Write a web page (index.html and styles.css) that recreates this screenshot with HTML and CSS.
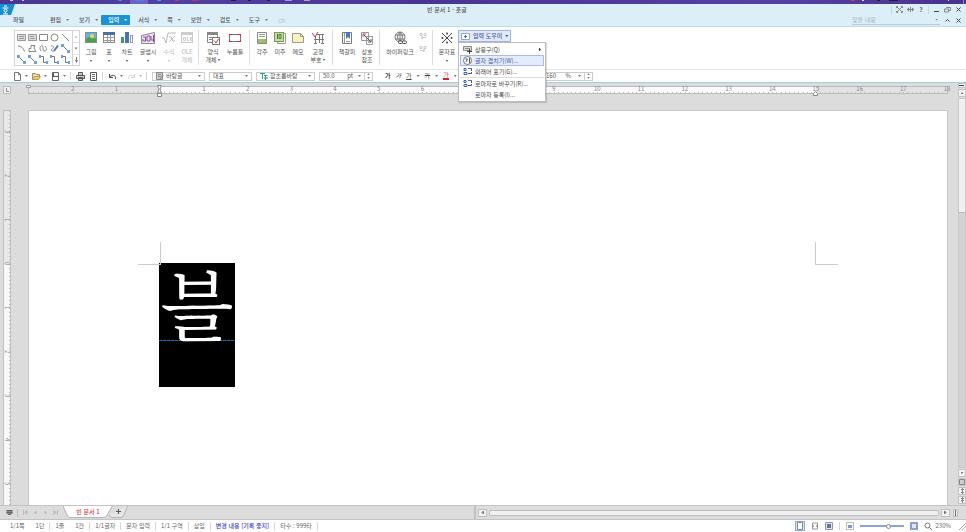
FILE: index.html
```
<!DOCTYPE html>
<html lang="ko">
<head>
<meta charset="utf-8">
<title>빈 문서 1 - 훈글</title>
<link rel="stylesheet" href="styles.css">
</head>
<body>
<div class="desktop">
  <svg width="820" height="4" aria-hidden="true">
    <rect x="130" width="18" height="4" fill="#6f62c4"/><rect x="136" width="7" height="1" fill="#2f8fe0"/>
    <g fill="#c8c4e4"><rect x="10" width="3" height="1"/><rect x="22" width="2" height="1"/></g>
    <rect x="118" width="4" height="1" fill="#3a8ddb"/><rect x="157" width="4" height="1" fill="#3a9be8"/>
    <rect x="175" width="4" height="1" fill="#c83a58"/><rect x="192" width="7" height="1" fill="#b8325c"/>
    <rect x="231" width="5" height="1" fill="#222"/><rect x="248" width="3" height="1" fill="#222"/><rect x="267" width="3" height="1" fill="#222"/>
    <rect x="285" width="7" height="1" fill="#8fa6d8"/><rect x="304" width="6" height="1" fill="#b9a898"/>
  </svg>
  <svg width="120" height="4" aria-hidden="true">
    <rect x="5" width="4" height="1" fill="#e03050"/><rect x="16" width="2" height="1" fill="#ddd"/><rect x="31" width="3" height="1" fill="#222"/><rect x="43" width="9" height="1" fill="#222"/><rect x="102" width="1" height="1" fill="#ddd"/><rect x="117" width="1" height="4" fill="#8a80c8"/>
  </svg>
</div>

<header class="head">
  <div class="titlebar">
    <svg class="logo" width="16" height="11" viewBox="0 0 16 11" aria-hidden="true"><path d="M0 0H15L11 11H0Z" fill="#168fd2"/><path d="M4 2H7M2.500 4H8.500M5.500 8V10M3 10H8" stroke="#fff" fill="none"/><circle cx="5.500" cy="6.500" r="1.500" stroke="#fff" fill="none"/></svg>
    <h1>빈 문서 1 - 훈글</h1>
    <div class="wins">
      <i class="sep"></i>
      <button aria-label="전체 화면"><svg width="7" height="7" viewBox="0 0 7 7"><path d="M.5 2V.5H2M5 .5H6.500V2M6.500 5V6.500H5M2 6.500H.5V5M1 1L6 6M6 1L1 6" class="ln"/></svg></button>
      <button aria-label="크기 조절"><svg width="7" height="7" viewBox="0 0 7 7"><path d="M0 3.500L2 1.500V5.500ZM7 3.500L5 1.500V5.500Z" fill="#666"/><path d="M1 3.500H6M3.500 1V6" class="ln"/></svg></button>
      <button aria-label="도움말"><b>?</b></button>
      <i class="sep"></i>
      <button aria-label="최소화"><svg width="7" height="7"><path d="M1 5.500H6" stroke="#444"/></svg></button>
      <button aria-label="이전 크기로"><svg width="7" height="7"><path d="M2.500 2V1.500H6.500V4.500H5M.5 3H4.500V6H.5Z" class="ln"/></svg></button>
      <button aria-label="닫기"><svg width="7" height="7"><path d="M1.500 1.500L5.500 5.500M5.500 1.500L1.500 5.500" stroke="#444"/></svg></button>
    </div>
  </div>
  <nav class="menubar">
    <button class="file">파일</button>
    <button>편집<i class="car"></i></button>
    <button>보기<i class="car"></i></button>
    <button class="on">입력<i class="car"></i></button>
    <button>서식<i class="car"></i></button>
    <button>쪽<i class="car"></i></button>
    <button>보안<i class="car"></i></button>
    <button>검토<i class="car"></i></button>
    <button>도구<i class="car"></i></button>
    <button aria-label="추가"><svg width="8" height="7"><path d="M1 2.500H4V5.500H1ZM5 5L7 2M4.500 1L7 6" stroke="#c3d2dc" fill="none"/></svg></button>
    <div class="find">
      <label><input type="text" placeholder="찾을 내용" aria-label="찾을 내용"><i class="car"></i></label>
      <button aria-label="접기"><svg width="7" height="7"><path d="M1.500 4.500L3.500 2.500L5.500 4.500" stroke="#444" fill="none"/></svg></button>
      <button aria-label="문서 닫기"><svg width="7" height="7"><path d="M1.500 1.500L5.500 5.500M5.500 1.500L1.500 5.500" stroke="#444"/></svg></button>
    </div>
  </nav>
</header>

<section class="ribbon">
  <div class="gallery">
    <div class="shapes">
      <button aria-label="가로 글상자"><svg width="9" height="9"><path d="M.5 1.500H8.500V7.500H.5ZM2 3.500H7M2 5.500H7" stroke="#999" fill="#ddd"/></svg></button>
      <button aria-label="세로 글상자"><svg width="9" height="9"><path d="M.5 1.500H8.500V7.500H.5ZM2 3.500H6M2 5.500H7" stroke="#999" fill="#ddd"/></svg></button>
      <button aria-label="직사각형"><svg width="9" height="9"><path d="M.5 1.500H8.500V7.500H.5Z" class="ln"/></svg></button>
      <button aria-label="타원"><svg width="9" height="9"><circle cx="4.500" cy="4.500" r="3.500" class="ln"/></svg></button>
      <button aria-label="직선"><svg width="9" height="9"><path d="M1 1L8 8" class="ln"/></svg></button>
      <button aria-label="호"><svg width="9" height="9"><path d="M1 2Q6 2 7.500 7.500" class="ln"/></svg></button>
      <button aria-label="다각형"><svg width="9" height="9"><path d="M3 1.500H7L6 4L8 7.500H1V4.500H3Z" class="ln"/></svg></button>
      <button aria-label="곡선"><svg width="9" height="9"><path d="M2 7C-1 2 4 0 4 3S4 7 6 7S8 4 6 2" class="ln"/></svg></button>
      <button aria-label="자유선"><svg width="9" height="9"><path d="M1 2C4 1 4 4 2 5S3 8 4 7" class="ln"/><path d="M4 7L8 1.500" stroke="#4a78c8" stroke-width="2"/></svg></button>
      <button aria-label="직선 연결선"><svg width="9" height="9"><use href="#conn"/></svg></button>
      <button aria-label="화살표 연결선"><svg width="9" height="9"><use href="#conn"/></svg></button>
      <button aria-label="양쪽 화살표 연결선"><svg width="9" height="9"><use href="#conn"/></svg></button>
      <button aria-label="꺾인 연결선"><svg width="9" height="9"><use href="#elbow"/></svg></button>
      <button aria-label="꺾인 화살표 연결선"><svg width="9" height="9"><use href="#elbow"/></svg></button>
      <button aria-label="꺾인 양쪽 연결선"><svg width="9" height="9"><use href="#elbow"/></svg></button>
    </div>
    <div class="gscroll">
      <button class="dim" aria-label="위"><i class="car up"></i></button><button aria-label="아래"><i class="car"></i></button><button aria-label="자세히"><svg width="5" height="6"><path d="M2.500 0V4" stroke="#777"/><path d="M1 3H4L2.500 6Z" fill="#777"/></svg></button>
    </div>
  </div>

  <div class="group first">
    <button class="tool"><svg width="14" height="14" viewBox="0 0 14 14"><rect x="1.500" y="1.500" width="11" height="10" fill="#57b8e8" stroke="#8a8a8a"/><path d="M2 11V8L5 6L8 8L12 7V11Z" fill="#4fa03c"/><circle cx="8" cy="5" r="2" fill="#ffd33a"/></svg>그림<i class="car"></i></button>
    <button class="tool"><svg width="14" height="14" viewBox="0 0 14 14"><rect x="1.500" y="1.500" width="11" height="10" fill="#fff" stroke="#888"/><rect x="1" y="1" width="12" height="3" fill="#4a6ea8"/><path d="M2 6.500H12M2 9.500H12M5.500 4V11M8.500 4V11" stroke="#999"/></svg>표<i class="car"></i></button>
    <button class="tool"><svg width="14" height="14" viewBox="0 0 14 14"><rect x="1" y="6" width="3" height="6" fill="#3c9a70"/><rect x="5" y="1" width="4" height="11" fill="#4a70b8"/><rect x="10.500" y="4.500" width="2" height="7" fill="#fff" stroke="#999"/></svg>차트<i class="car"></i></button>
    <button class="tool w24"><svg width="16" height="14" viewBox="0 0 16 14"><path d="M1.500 4.500L14.500 1.500V12.500H1.500Z" fill="#f1e8f6" stroke="#888"/><path d="M3 6H5.500V10M3 8V10H6M7 5V10H10V5ZM11 5V9H13M13.500 4V11" stroke="#8a4aa8" fill="none"/></svg>글맵시<i class="car"></i></button>
    <button class="tool off" disabled><svg width="16" height="14" viewBox="0 0 16 14"><path d="M1 7L3 7L5 12L7 2H15M8 6Q11 5 11 8T14 10M14 5L8 11" stroke="#bbb" fill="none"/></svg>수식<i class="car"></i></button>
    <button class="tool off" disabled><svg width="14" height="14" viewBox="0 0 14 14"><rect x="1.500" y="1.500" width="11" height="10" fill="#fff" stroke="#ccc"/><path d="M1 3H13" stroke="#ccc" stroke-width="2"/><path d="M3.500 6.500H5.500V9.500H3.500ZM7.500 6V9.500H9M12 6.500H10.500V9.500H12M10 8H12" stroke="#ccc" fill="none"/></svg><span>OLE</span><span>개체</span></button>
  </div>
  <div class="group">
    <button class="tool w22"><svg width="14" height="14" viewBox="0 0 14 14"><path d="M1.500 1.500H11.500V11.500H1.500Z" fill="#fff" stroke="#888"/><path d="M1 2.500H12" stroke="#888" stroke-width="3"/><path d="M3 6.500H9M3 8.500H6" stroke="#888"/><rect x="6.500" y="6.500" width="7" height="7" fill="#fff" stroke="#777"/><path d="M8 9.500L10 12L12.500 8" stroke="#d43a3a" fill="none"/></svg><span>양식</span><span>개체<i class="car"></i></span></button>
    <button class="tool w22"><svg width="14" height="14" viewBox="0 0 14 14"><rect x="1.500" y="3.500" width="11" height="7" fill="#fff" stroke="#777"/><path d="M1.500 5V3.500H4M12.500 9V10.500H10M4 10.500H1.500V9M10 3.500H12.500V5" stroke="#e02828" fill="none"/></svg>누름틀</button>
  </div>
  <div class="group">
    <button class="tool"><svg width="14" height="14" viewBox="0 0 14 14"><path d="M2.500 1.500H11.500V12.500H2.500Z" fill="#fff" stroke="#888"/><path d="M4 3.500H10M4 5.500H10" stroke="#999"/><rect x="3" y="8" width="8" height="4" fill="#9cc06a"/></svg>각주</button>
    <button class="tool"><svg width="14" height="14" viewBox="0 0 14 14"><path d="M4.500 2.500H12.500V12.500H4.500Z" fill="#fff" stroke="#999"/><rect x="1.500" y="1.500" width="9" height="9" fill="#c4dc9c" stroke="#7a9a5a"/><path d="M4.500 3V8M6 3.500H8V7.500H6Z" stroke="#557a3a" fill="none"/></svg>미주</button>
    <button class="tool"><svg width="14" height="14" viewBox="0 0 14 14"><path d="M1.500 2.500H9.500L12.500 5.500V11.500H1.500Z" fill="#fff3ba" stroke="#999"/><path d="M9.500 2.500V5.500H12.500" fill="none" stroke="#999"/></svg>메모</button>
    <button class="tool w22"><svg width="14" height="14" viewBox="0 0 14 14"><path d="M5 3.500H13M3 8.500H13M4.500 5V12M8.500 4V12M11.500 4V12M3 12.500H6M10 12.500H13" stroke="#777"/><path d="M1 2L4 6L7 1" stroke="#d83030" fill="none"/></svg><span>교정</span><span>부호<i class="car"></i></span></button>
  </div>
  <div class="group">
    <button class="tool w22"><svg width="14" height="14" viewBox="0 0 14 14"><path d="M2.500 1.500H11.500V12.500H2.500Z" fill="#fff" stroke="#777"/><path d="M4.500 2V12M6 10.500H10" stroke="#999"/><path d="M6 1H10V8L8 6L6 8Z" fill="#4a78c0"/></svg>책갈피</button>
    <button class="tool"><svg width="14" height="14" viewBox="0 0 14 14"><path d="M1.500 1.500H8.500V9.500H1.500ZM6.500 5.500H12.500V13.500H6.500Z" fill="#fff" stroke="#999"/><path d="M3 3L11 11M8 11H11V8" stroke="#555" fill="none"/><path d="M3 6V3H6" stroke="#d84040" fill="none"/></svg><span>상호</span><span>참조</span></button>
  </div>
  <div class="group">
    <button class="tool w34"><svg width="14" height="14" viewBox="0 0 14 14"><circle cx="7" cy="6" r="5" fill="#fff" stroke="#777"/><path d="M2 4H12M2 8H12M7 1V11M7 1Q2 6 7 11Q12 6 7 1" stroke="#777" fill="none"/><rect x="5.500" y="10" width="4" height="2.500" rx="1" fill="#fff" stroke="#444"/><rect x="9.500" y="10" width="4" height="2.500" rx="1" fill="#fff" stroke="#444"/></svg>하이퍼링크</button>
    <div class="pair">
      <button aria-label="이전 연결" disabled><svg width="8" height="8"><path d="M1 1.500H3V3.500H1ZM5 1.500H7V3.500H5ZM7 5.500H2M4 4L2 5.500L4 7" stroke="#ccc" fill="none"/></svg></button>
      <button aria-label="다음 연결" disabled><svg width="8" height="8"><path d="M1 1.500H3V3.500H1ZM5 1.500H7V3.500H5ZM1 5.500H6M4 4L6 5.500L4 7" stroke="#ccc" fill="none"/></svg></button>
    </div>
  </div>
  <div class="group">
    <button class="tool w22"><svg width="14" height="14" viewBox="0 0 14 14"><path d="M2 2L12 12M12 2L2 12" stroke="#444"/><g fill="#444"><circle cx="7" cy="2.500" r="1"/><circle cx="7" cy="11.500" r="1"/><circle cx="2.500" cy="7" r="1"/><circle cx="11.500" cy="7" r="1"/></g></svg>문자표<i class="car"></i></button>
    <div class="helper">
      <button class="helpbtn"><svg width="9" height="7"><path d="M.5 .5H8.500V6.500H.5Z" stroke="#9aa8c4" fill="#fff"/><path d="M3 3.500H6M4.500 2V5" stroke="#3a6ad0"/></svg>입력 도우미<i class="car"></i></button>
      <div class="menu" role="menu">
        <button role="menuitem"><svg width="10" height="9"><path d="M.5 1.500H8.500V5.500H.5ZM2 3.500H7" stroke="#888" fill="#ddd"/><path d="M6.500 4V9M4 6.500H9" stroke="#444"/></svg>상용구(Q)<i class="car right"></i></button>
        <button role="menuitem" class="hot"><svg width="10" height="9"><circle cx="4.500" cy="4.500" r="4" stroke="#777" fill="#fff"/><path d="M2.500 3H4.500L3 6M6.500 2V7" stroke="#555" fill="none"/></svg>글자 겹치기(W)...</button>
        <button role="menuitem"><svg width="10" height="9"><use href="#swap"/></svg>외래어 표기(G)...</button>
        <hr>
        <button role="menuitem"><svg width="10" height="9"><use href="#swap"/></svg>로마자로 바꾸기(R)...</button>
        <button role="menuitem"><svg width="10" height="9"></svg>로마자 등록(I)...</button>
      </div>
    </div>
  </div>
</section>

<section class="toolbar">
  <button aria-label="새 문서"><svg width="9" height="9"><path d="M1.500 .5H5.500L7.500 2.500V8.500H1.500ZM5.500 .5V2.500H7.500" stroke="#777" fill="#fff"/></svg><i class="car"></i></button>
  <button aria-label="불러오기"><svg width="9" height="9"><path d="M.5 7.500V1.500H3.500L4.500 2.500H7.500V4" stroke="#a08a60" fill="#f5dc9a"/><path d="M.5 7.500L2.500 4.500H8.500L6.500 7.500Z" stroke="#c09850" fill="#f5cc78"/></svg><i class="car"></i></button>
  <button aria-label="저장하기"><svg width="9" height="9"><path d="M1.500 .5H7.500V8.500H1.500Z" stroke="#666" fill="#fff"/><path d="M1 4.500H8M2.500 1V4" stroke="#555"/></svg><i class="car"></i></button>
  <i class="sep"></i>
  <button aria-label="인쇄"><svg width="9" height="9"><path d="M2.500 3V.5H6.500V3M.5 3.500H8.500V6.500H.5ZM2.500 5.500H6.500V8.500H2.500Z" stroke="#555" fill="#ccc"/></svg></button>
  <button aria-label="미리 보기"><svg width="9" height="9"><path d="M1.500 .5H7.500V8.500H1.500Z" stroke="#555" fill="#fff"/><path d="M3 2.500H6M3 4.500H6M3 6.500H6" stroke="#666" fill="none"/></svg></button>
  <i class="sep"></i>
  <button aria-label="되돌리기"><svg width="9" height="9"><path d="M7.500 7C8 3 5 2.500 2 4.500M1.500 2V5.500H5" stroke="#444" fill="none"/></svg><i class="car"></i></button>
  <button class="dim" aria-label="다시 실행"><svg width="9" height="9"><path d="M1.500 7C1 3 4 2.500 7 4.500M7.500 2V5.500H4" stroke="#aaa" fill="none"/></svg><i class="car"></i></button>
  <i class="sep"></i>
  <label class="pick style"><svg width="8" height="8"><path d="M.5 .5H6.500V7.500H.5ZM2 2.500H5M2 4.500H5" stroke="#888" fill="#ccc"/><path d="M3 8L7.500 3" stroke="#888"/></svg><select aria-label="스타일"><option>바탕글</option></select><i class="car"></i></label>
  <label class="pick lang"><select aria-label="언어"><option>대표</option></select><i class="car"></i></label>
  <label class="pick font"><svg width="8" height="8"><path d="M0 1.500H5M2.500 1.500V7M4 3.500H7.500M5.500 3V8M4 6H8" stroke="#2a9a8a" fill="none"/></svg><select aria-label="글꼴"><option>함초롬바탕</option></select><i class="car"></i></label>
  <label class="pick size"><input type="text" value="50.0" aria-label="글자 크기">pt<i class="car"></i></label>
  <span class="spin"><button aria-label="크게"><i class="car up"></i></button><button aria-label="작게"><i class="car"></i></button></span>
  <div class="chars">
    <button aria-label="진하게"><b>가</b></button>
    <button aria-label="기울임"><em>가</em></button>
    <button class="under"><u>가</u><i class="car"></i></button>
    <button class="strike"><s>가</s><i class="car"></i></button>
    <button class="color"><span>가</span><i class="car"></i></button>
  </div>
  <label class="pick line"><input type="text" value="160" aria-label="줄 간격">%<i class="car"></i></label>
  <span class="spin"><button aria-label="늘리기"><i class="car up"></i></button><button aria-label="줄이기"><i class="car"></i></button></span>
</section>

<main class="work">
  <div class="left">
    <button class="corner" aria-label="탭 종류"><svg width="6" height="6"><path d="M2.500 1V4.500H5" stroke="#888" fill="none"/></svg></button>
    <div class="vruler">
      <div class="out half"></div><div class="out"><span>3</span></div><div class="out"><span>2</span></div><div class="out"><span>1</span></div>
      <div><span>0</span></div><div><span>1</span></div><div><span>2</span></div><div><span>3</span></div><div><span>4</span></div><div><span>5</span></div>
    </div>
  </div>
  <div class="center">
    <div class="hruler">
      <div class="out"><svg class="mark" width="5" height="9"><path d="M.5 .5H4.500V2.500H.5Z" fill="#fff" stroke="#999"/></svg></div><div class="out"><span>2</span></div><div class="out"><span>1</span></div>
      <div><svg class="mark" width="5" height="12"><path d="M.5 .5H4.500L3 4L4.500 8H.5L2 4ZM.5 8.500H4.500V11.500H.5Z" fill="#fff" stroke="#888"/></svg></div><div><span>1</span></div><div><span>2</span></div><div><span>3</span></div><div><span>4</span></div><div><span>5</span></div><div><span>6</span></div><div><span>7</span></div><div></div><div><span>9</span></div><div><span>10</span></div><div><span>11</span></div><div><span>12</span></div><div><span>13</span></div><div><span>14</span></div>
      <div class="out"><span>15</span><svg class="mark low" width="5" height="5"><path d="M.5 4.500V2.500L2.500 .5L4.500 2.500V4.500Z" fill="#fff" stroke="#888"/></svg></div><div class="out"><span>16</span></div><div class="out last"><span>17</span><span class="end">18</span></div>
    </div>
    <article class="page"><div class="body"><p class="glyph">블</p></div></article>
  </div>
  <div class="vscroll">
    <button class="short" aria-label="나누기"><svg width="6" height="3"><path d="M0 1.500H5" stroke="#444"/></svg></button>
    <button aria-label="위로"><i class="car up"></i></button>
    <div class="track"><div class="thumb"></div></div>
    <button aria-label="아래로"><i class="car"></i></button>
    <button aria-label="이동"><svg width="6" height="6"><path d="M.5 .5H5.500V5.500H.5Z" stroke="#888" fill="#ccc"/></svg></button>
    <button aria-label="이전 쪽"><svg width="5" height="6"><path d="M2.500 0V6M1 1.500H4M1 4.500H4" stroke="#888"/></svg></button>
    <button aria-label="다음 쪽"><svg width="5" height="6"><path d="M2.500 0V6M1 1.500H4M1 3.500H4" stroke="#888"/></svg></button>
  </div>
</main>

<div class="tabs">
  <div class="tableft">
    <button aria-label="문서 목록"><svg width="7" height="7"><path d="M.5 1H6.500V5H.5Z" fill="#888"/><path d="M.5 1.500H6.500M.5 3.500H6.500M2 5.500H5" stroke="#666"/></svg></button>
    <i class="sep"></i>
    <button aria-label="처음"><svg width="5" height="5"><path d="M.5 0V5M4 .5L2 2.500L4 4.500Z" stroke="#bbb" fill="#bbb"/></svg></button>
    <button aria-label="이전"><svg width="5" height="5"><path d="M3 1L1.500 2.500L3 4Z" stroke="#bbb" fill="#bbb"/></svg></button>
    <button aria-label="다음"><svg width="5" height="5"><path d="M2 1L3.500 2.500L2 4Z" stroke="#bbb" fill="#bbb"/></svg></button>
    <button aria-label="마지막"><svg width="5" height="5"><path d="M4.500 0V5M1 .5L3 2.500L1 4.500Z" stroke="#bbb" fill="#bbb"/></svg></button>
    <button class="doc"><svg width="50" height="12" aria-hidden="true"><path d="M0 0L4 9Q5 11.500 7 11.500H41Q43 11.500 44 9L49.500 0" fill="#fff" stroke="#b4b4b4"/></svg><span>빈 문서 1</span></button>
    <button class="doc plus" aria-label="새 탭"><svg width="20" height="12" aria-hidden="true"><path d="M1 9Q2 11.500 4 11.500H13Q15 11.500 16 9L19.500 0" fill="#e6e6e6" stroke="#b4b4b4"/><path d="M8 5.500H13M10.500 3V8" stroke="#555"/></svg></button>
  </div>
  <div class="hscroll">
    <button aria-label="왼쪽"><svg width="5" height="5"><path d="M3.500 1V4L2 2.500Z" stroke="#777" fill="#777"/></svg></button>
    <div class="htrack"></div>
    <button aria-label="오른쪽"><svg width="5" height="5"><path d="M1.500 1V4L3 2.500Z" stroke="#777" fill="#777"/></svg></button>
    <button class="thin" aria-label="나누기"><svg width="3" height="6"><path d="M1.500 0V6" stroke="#666"/></svg></button>
  </div>
</div>

<footer class="status">
  <div><span>1/1쪽</span><span>1단</span></div><div><span>1줄</span><span>1칸</span></div><div>1/1글자</div><div>문자 입력</div><div>1/1 구역</div><div>삽입</div><div class="blue">변경 내용 [기록 중지]</div><div>타수 : 999타</div><div class="rest"></div>
  <section class="view">
    <button class="sel" aria-label="쪽 윤곽"><svg width="10" height="10"><path d="M2.500 1.500H7.500V8.500H2.500Z" fill="#fff" stroke="#888"/></svg></button>
    <button aria-label="폭 맞춤"><svg width="8" height="8"><path d="M1.500 1V7H6.500V1Z" fill="#fff" stroke="#999"/><path d="M1 4H3M5 4H7" stroke="#777"/></svg></button>
    <button aria-label="쪽 맞춤"><svg width="8" height="8"><path d="M.5 .5H7.500V7.500H.5Z" fill="#dde6f6" stroke="#8a98b8"/><rect x="2" y="2" width="4" height="4" fill="#678"/></svg></button>
    <i class="sep"></i>
    <button aria-label="축소"><svg width="8" height="8"><path d="M.5 .5H7.500V7.500H.5Z" fill="#fff" stroke="#bbb"/><rect x="2" y="3" width="4" height="3" fill="#7a98d8"/></svg></button>
    <input type="range" min="0" max="100" value="65" aria-label="확대 비율">
    <button aria-label="확대"><svg width="8" height="8"><path d="M1 1H7V7H1Z" fill="#dfe8fb" stroke="#8c9fd4" stroke-width="2"/></svg></button>
    <button class="zoom"><svg width="8" height="8"><circle cx="3.500" cy="3.500" r="2.500" stroke="#777" fill="#fff"/><path d="M5.500 5.500L8 8" stroke="#777"/></svg>230%</button>
    <svg width="7" height="7" aria-hidden="true"><path d="M0 7L7 0M3 7L7 3" stroke="#aaa"/></svg>
  </section>
</footer>

<svg width="0" height="0" class="defs" aria-hidden="true"><defs>
  <g id="conn"><path d="M2 2L7 7" stroke="#777"/><rect width="3" height="3" fill="#6aa4dc"/><rect x="6" y="6" width="3" height="3" fill="#6aa4dc"/></g>
  <g id="elbow"><path d="M1 1.500H4.500V7.500H8" stroke="#777" fill="none"/><rect width="2" height="3" fill="#6aa4dc"/><rect x="7" y="6" width="2" height="3" fill="#6aa4dc"/></g>
  <g id="swap"><path d="M1 1.500H3V3.500H1ZM1 5.500H4V7.500H1Z" stroke="#3a62b8" fill="none"/><path d="M8.500 2V4M5 6.500H8.500V5" stroke="#555" fill="none"/><path d="M5 1.500H9" stroke="#3a80e0"/></g>
</defs></svg>
</body>
</html>
```
FILE: styles.css
```
* { box-sizing: border-box; }
html, body { height: 100%; margin: 0; }
body {
  display: flex; flex-direction: column; overflow: hidden;
  background: #fff; color: #555;
  font: 6px/8px "Noto Sans CJK KR", "Noto Sans", sans-serif;
}
button, input, select {
  margin: 0; padding: 0; border: 0; background: none;
  color: inherit; font: inherit; border-radius: 0; appearance: none; outline: 0;
}
button { display: flex; align-items: center; justify-content: center; white-space: nowrap; }
input, select { min-width: 0; width: 100%; height: 8px; }
svg { display: block; flex: none; }
.defs { position: absolute; }
.ln { fill: none; stroke: #888; }
.sep { width: 1px; height: 8px; background: #d4d4d4; flex: none; }
.car {
  width: 3px; height: 2px; flex: none; background: #777;
  clip-path: polygon(0 0, 100% 0, 50% 100%);
}
.car.up { clip-path: polygon(50% 0, 100% 100%, 0 100%); }
.car.right { width: 2px; height: 4px; background: #333; clip-path: polygon(0 0, 100% 50%, 0 100%); }
.dim { opacity: .5; }

.desktop { display: flex; justify-content: space-between; height: 4px; overflow: hidden; flex: none; background: linear-gradient(90deg, #4a3690, #5140a4 16%, #4a3594 45%, #5540a4 80%, #483290); }

.head { flex: none; height: 23px; background: #dceef8; border-bottom: 1px solid #b9def2; }
.titlebar { display: grid; grid-template-columns: 427px 1fr auto; height: 11px; align-items: center; padding-right: 4px; }
.titlebar h1 { margin: 0; font-size: 6px; font-weight: 500; }
.wins { display: flex; align-items: center; gap: 3px; }
.wins button, .find button { width: 8px; height: 8px; }
.wins .sep { background: #c4d6e0; }
.menubar { display: flex; align-items: center; height: 11px; padding: 0 4px 1px 13px; }
.menubar > button { gap: 5px; height: 10px; margin-right: 10px; font-weight: 500; }
.menubar .file { margin-right: 26px; }
.menubar .on { margin: 0 8px 0 -7px; padding: 0 3px 0 7px; background: #1a92d6; color: #fff; border-radius: 1px; }
.menubar .on .car { background: #fff; }
.find { display: flex; align-items: center; gap: 3px; margin-left: auto; }
.find label { display: flex; align-items: center; width: 88px; height: 9px; padding-right: 2px; border-bottom: 1px solid #b8cad4; }
.find input::placeholder { color: #aab9c4; opacity: 1; }

.ribbon { display: flex; flex: none; height: 43px; padding: 3px 0 3px 14px; border-bottom: 1px solid #e4e4e4; position: relative; z-index: 2; }
.gallery { display: flex; height: 36px; border: 1px solid #d4d4d4; margin-right: 2px; }
.shapes { display: grid; grid-template-columns: repeat(5, 11px); grid-auto-rows: 11px; padding: 1px; }
.gscroll { display: grid; grid-template-rows: repeat(3, 1fr); width: 7px; border-left: 1px solid #d4d4d4; }
.gscroll button + button { border-top: 1px solid #e4e4e4; }
.group { display: flex; padding-right: 3px; }
.group.first { padding-right: 2px; }
.group + .group { padding-left: 4px; background: linear-gradient(#ddd, #ddd) 0 0 / 1px 35px no-repeat; }
.tool { flex-direction: column; justify-content: flex-start; width: 18px; height: 36px; padding-top: 1px; }
.tool svg { margin-bottom: 3px; }
.tool > .car { margin-top: 4px; }
.tool span { display: flex; align-items: center; gap: 1px; }
.off { color: #bbb; }
.off .car { background: #ccc; }
.w22 { width: 22px; }
.w24 { width: 24px; }
.w34 { width: 34px; }
.pair { width: 12px; padding-top: 2px; display: grid; grid-auto-rows: 13px; align-content: start; }
.pair button { align-items: flex-start; }
.helper { position: relative; }
.helpbtn { height: 12px; padding: 0 2px 0 2px; gap: 3px; border: 1px solid #9fb4e0; background: #e2e9f8; color: #40599c; font-weight: 500; }
.helpbtn .car { background: #2d4a96; }
.menu { position: absolute; top: 12px; left: 0; width: 88px; padding: 1px 1px; background: #fff; border: 1px solid #bcbcbc; box-shadow: 1px 1px 1px #0002; }
.menu button { width: 100%; height: 11px; padding: 0 2px; gap: 2px; justify-content: flex-start; border: 1px solid transparent; color: #444; }
.menu .hot { background: #e4ebfa; border-color: #a9bce8; color: #40599c; }
.menu .right { margin-left: auto; }
.menu hr { height: 1px; margin: 0; border: 0; background: #ddd; }

.toolbar { display: flex; align-items: center; flex: none; height: 13px; padding-left: 13px; border-bottom: 1px solid #9fcfe2; }
.toolbar > button { gap: 3px; margin-right: 4px; }
.toolbar > .sep { margin-right: 5px; }
.pick { display: flex; align-items: center; height: 9px; padding: 0 3px; gap: 2px; border: 1px solid #ccc; margin-right: 4px; }
.style { width: 53px; }
.lang { width: 43px; }
.font { width: 59px; }
.size { width: 46px; margin-right: 0; gap: 5px; }
.line { width: 63px; margin-right: 0; gap: 7px; }
.line input { padding-left: 20px; }
.spin { display: grid; width: 8px; height: 9px; border: 1px solid #ccc; border-left: 0; }
.chars { display: flex; align-items: center; gap: 5px; width: 149px; padding-left: 12px; color: #444; }
.chars button { gap: 5px; }
.color span { border-bottom: 2px solid #e02020; color: #c05050; line-height: 6px; }

.work { display: flex; flex: 1; min-height: 0; background: #dcdcdc; }
.left { width: 28px; padding: 3px 0 0 3px; display: flex; flex-direction: column; }
.corner { width: 8px; height: 8px; background: #f4f4f4; border: 1px solid #bbb; }
.vruler { flex: 1; min-height: 0; width: 8px; margin-top: 16px; overflow: hidden; border: solid #c0c0c0; border-width: 1px 1px 0; }
.vruler > div { height: 44px; background: repeating-linear-gradient(#bbb 0 1px, transparent 1px 4px) right / 1px 100% no-repeat #f8f8f8; }
.vruler .out { background-color: #e8e8e8; }
.vruler .half { height: 21px; }
.vruler span { display: block; width: 6px; height: 8px; margin-top: -4px; writing-mode: vertical-rl; line-height: 6px; text-align: center; float: left; color: #888; }
.center { flex: 1; min-width: 0; padding-right: 10px; display: flex; flex-direction: column; }
.hruler { display: flex; height: 8px; margin-top: 3px; border: 1px solid #bcbcbc; }
.hruler > div { position: relative; flex: 1; background: repeating-linear-gradient(90deg, #bbb 0 1px, transparent 1px 10%) bottom / 100% 1px no-repeat #fafafa; }
.hruler .out { background-color: #e2e2e2; }
.hruler span { position: absolute; top: -1px; left: -10px; width: 20px; text-align: center; line-height: 6px; color: #888; }
.hruler .end { left: auto; right: -10px; }
.mark { position: absolute; top: -2px; left: -3px; z-index: 1; }
.mark.low { top: 4px; }
.page { flex: 1; min-height: 0; margin-top: 16px; padding: 152px 130px 0; background: #fff; border: solid #c8c8c8; border-width: 1px 1px 0; }
.body { position: relative; }
.body::before, .body::after { content: ""; position: absolute; top: -21px; width: 22px; height: 22px; border-bottom: 1px solid #ccc; }
.body::before { left: -21px; border-right: 1px solid #ccc; }
.body::after { right: -21px; border-left: 1px solid #ccc; }
.glyph { width: 76px; height: 124px; margin: 0; color: #fff; background: repeating-linear-gradient(90deg, #1c6cb4 0 3px, #0a3050 3px 4px) 0 77px / 100% 1px no-repeat #000; font-size: 76px; line-height: 80px; font-family: "Noto Serif CJK KR", "Noto Sans CJK KR", serif; font-weight: 400; text-align: center; }
.vscroll { display: flex; flex-direction: column; gap: 1px; width: 8px; padding-bottom: 1px; }
.vscroll button { height: 8px; background: #f2f2f2; border: 1px solid #c4c4c4; }
.vscroll .short { height: 5px; }
.track { flex: 1; background: #d2d2d2; border: 1px solid #c8c8c8; }
.thumb { height: 114px; background: #f0f0f0; border-bottom: 1px solid #bbb; }

.tabs { display: flex; flex: none; height: 15px; background: #dcdcdc; border-top: 1px solid #c4c4c4; border-bottom: 1px solid #c4c4c4; }
.tableft { display: flex; align-items: center; width: 476px; padding-left: 6px; gap: 5px; border-right: 2px solid #c0c0c0; }
.doc { display: grid; align-self: flex-start; }
.doc > * { grid-area: 1 / 1; place-self: center; }
.doc span { color: #d04040; font-weight: 500; }
.plus { margin-left: -10px; }
.tableft .sep { margin-left: -1px; background: #bbb; }
.hscroll { display: flex; flex: 1; align-items: center; gap: 2px; padding: 0 8px 0 2px; }
.hscroll button { width: 9px; height: 8px; background: #f2f2f2; border: 1px solid #c0c0c0; }
.hscroll .thin { width: 5px; margin-left: 1px; }
.htrack { flex: 1; height: 6px; background: #f0f0f0; border: 1px solid #bebebe; border-radius: 2px; }

.status { display: flex; align-items: center; flex: none; height: 12px; padding-left: 5px; color: #666; white-space: nowrap; }
.status > div { display: flex; gap: 11px; padding: 0 5px; border-right: 1px solid #d8d8d8; }
.status .rest { border: 0; flex: 1; }
.status .blue { color: #3a3ad0; font-weight: 500; }
.view { display: flex; align-items: center; gap: 6px; }
.sel { background: #dce6fa; outline: 1px solid #8fa8e0; outline-offset: -1px; }
.zoom { gap: 3px; margin-right: 2px; }
.view input { width: 44px; background: linear-gradient(#8aa4dc, #8aa4dc) center / 100% 2px no-repeat; }
.view input::-webkit-slider-thumb { appearance: none; width: 5px; height: 5px; border: 1px solid #888; border-radius: 50%; background: #fff; }
```
